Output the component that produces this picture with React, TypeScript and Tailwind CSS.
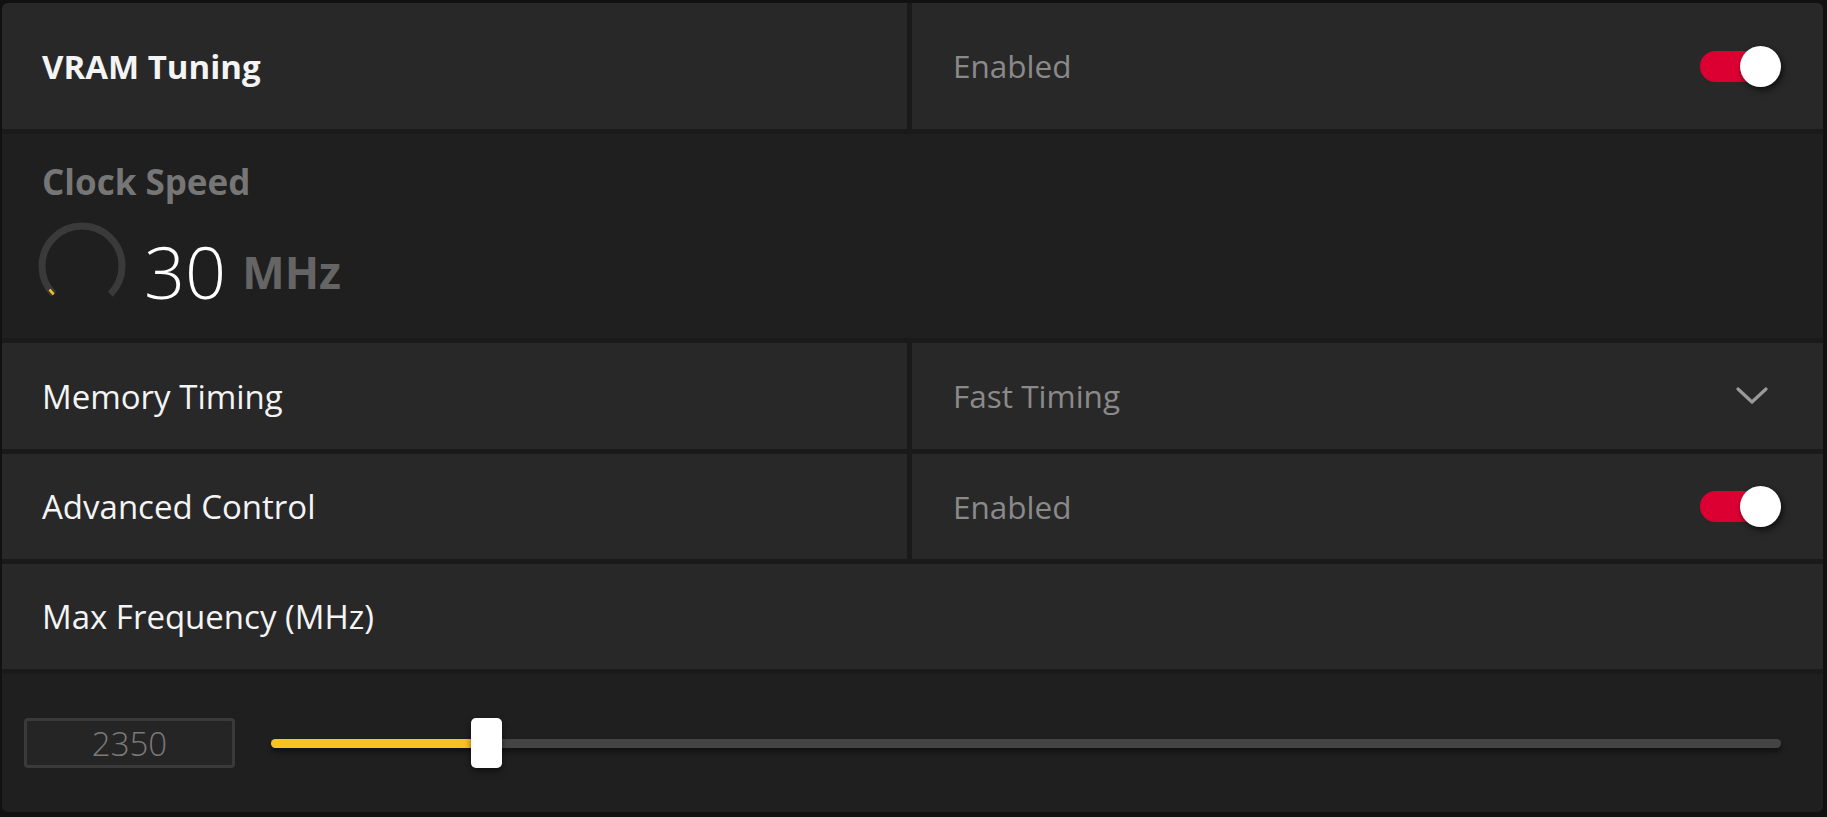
import React from 'react';

const font = { fontFamily: '"Open Sans", "Noto Sans", sans-serif' };

const Toggle = () => (
    <div className="relative w-[81px] h-[41px]">
        <div className="absolute left-0 top-[5px] w-[64px] h-[31px] rounded-full bg-[#dc0032]" />
        <div className="absolute right-0 top-0 w-[41px] h-[41px] rounded-full bg-white shadow-[2px_3px_6px_rgba(0,0,0,0.65)]" />
    </div>
);

const Chevron = () => (
    <svg width="32" height="18" viewBox="0 0 32 18" fill="none">
        <polyline points="2,2 16,15 30,2" stroke="#9a9a9a" strokeWidth="3.2" strokeLinecap="round" strokeLinejoin="round" />
    </svg>
);

const Gauge = () => (
    <svg width="90" height="90" viewBox="0 0 90 90" fill="none">
        <path d="M16.72 73.28 A40 40 0 1 1 73.28 73.28" stroke="#3a3a3a" strokeWidth="7" />
        <path d="M16.72 73.28 A40 40 0 0 1 12.6 68.4" stroke="#f8c220" strokeWidth="2.5" />
    </svg>
);

const SplitRow = ({ label, value, bold, right, h }: { label: string; value: string; bold?: boolean; right: React.ReactNode; h: string }) => (
    <div className={`flex gap-[5px] ${h}`}>
        <div className="w-[905px] bg-[#282828] flex items-center pl-[40px]">
            <span className={`text-[33px] leading-none text-[#f4f4f4] ${bold ? 'font-bold' : ''}`}>{label}</span>
        </div>
        <div className="flex-1 bg-[#282828] flex items-center justify-between pl-[41px] pr-[42px]">
            <span className="text-[31.5px] leading-none text-[#8a8a8a]">{value}</span>
            {right}
        </div>
    </div>
);

export default function App() {
    return (
        <div className="w-[1827px] h-[817px] bg-[#111111] pt-[3px] pl-[2px] pr-[4px] pb-[5px]" style={font}>
            <div className="h-full rounded-[6px] overflow-hidden bg-[#1a1a1a] flex flex-col gap-[5px]">
                <SplitRow label="VRAM Tuning" value="Enabled" bold h="h-[126px]" right={<Toggle />} />

                <div className="h-[204px] bg-[#1f1f1f] pl-[40px] pt-[30px] flex flex-col">
                    <span className="text-[35px] leading-none font-bold text-[#767676]">Clock Speed</span>
                    <div className="flex items-center mt-[22px] -ml-[5px]">
                        <Gauge />
                        <div className="flex items-center gap-[16px] ml-[17px] pt-[10px]">
                            <span className="text-[72px] leading-none font-light text-white">30</span>
                            <span className="text-[45px] leading-none font-bold text-[#656565]">MHz</span>
                        </div>
                    </div>
                </div>

                <SplitRow label="Memory Timing" value="Fast Timing" h="h-[106px]" right={<div className="pr-[13px]"><Chevron /></div>} />
                <SplitRow label="Advanced Control" value="Enabled" h="h-[105px]" right={<Toggle />} />

                <div className="h-[105px] bg-[#282828] flex items-center pl-[40px]">
                    <span className="text-[33px] leading-none text-[#f4f4f4]">Max Frequency (MHz)</span>
                </div>

                <div className="flex-1 bg-[#1f1f1f] flex items-center pl-[22px] pr-[42px]">
                    <div className="w-[211px] h-[50px] rounded-[4px] border-[3px] border-[#3a3a3a] bg-[#252525] flex items-center justify-center">
                        <span className="text-[33px] leading-none font-light text-[#7a7a7a]">2350</span>
                    </div>
                    <div className="relative flex-1 ml-[36px] h-[50px] flex items-center">
                        <div className="w-full h-[9px] rounded-full bg-[#444444] shadow-[0_4px_5px_rgba(0,0,0,0.45)] overflow-hidden">
                            <div className="h-full w-[215px] bg-[#f8c220]" />
                        </div>
                        <div className="absolute left-[200px] top-0 w-[31px] h-[50px] rounded-[5px] bg-white shadow-[0_3px_6px_rgba(0,0,0,0.5)]" />
                    </div>
                </div>
            </div>
        </div>
    );
}
